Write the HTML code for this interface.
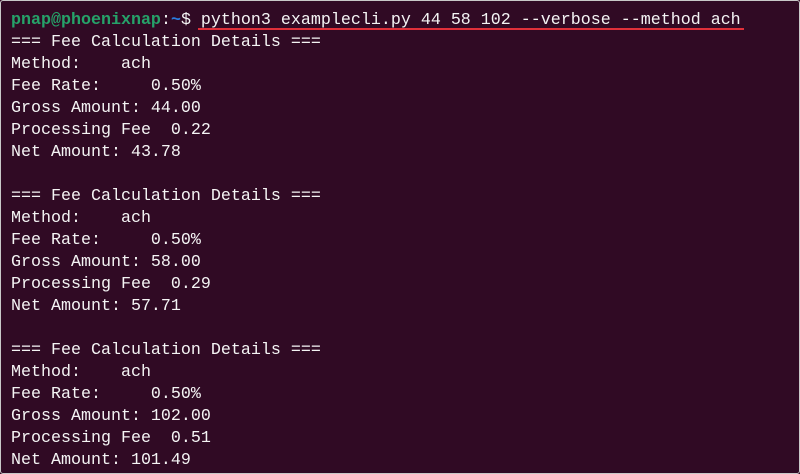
<!DOCTYPE html>
<html><head><style>
html,body{margin:0;padding:0;}
body{width:800px;height:474px;background:#300a24;overflow:hidden;position:relative;}
.frame{position:absolute;left:0;top:0;width:798px;height:472px;border:1px solid #c8c8c8;border-radius:3px;}
pre{position:absolute;left:11px;top:10px;margin:0;font-family:"Liberation Mono",monospace;font-size:16.67px;line-height:22px;color:#f4f4f4;}
.g{color:#26a269;font-weight:bold;}
.b{color:#2a7bde;font-weight:bold;}
.u{position:absolute;left:198px;top:28px;width:546px;height:2px;background:#e0303a;}
</style></head><body>
<div class="frame"></div>
<pre><span class="g">pnap@phoenixnap</span>:<span class="b">~</span>$ python3 examplecli.py 44 58 102 --verbose --method ach
=== Fee Calculation Details ===
Method:    ach
Fee Rate:     0.50%
Gross Amount: 44.00
Processing Fee  0.22
Net Amount: 43.78

=== Fee Calculation Details ===
Method:    ach
Fee Rate:     0.50%
Gross Amount: 58.00
Processing Fee  0.29
Net Amount: 57.71

=== Fee Calculation Details ===
Method:    ach
Fee Rate:     0.50%
Gross Amount: 102.00
Processing Fee  0.51
Net Amount: 101.49</pre>
<div class="u"></div>
</body></html>
